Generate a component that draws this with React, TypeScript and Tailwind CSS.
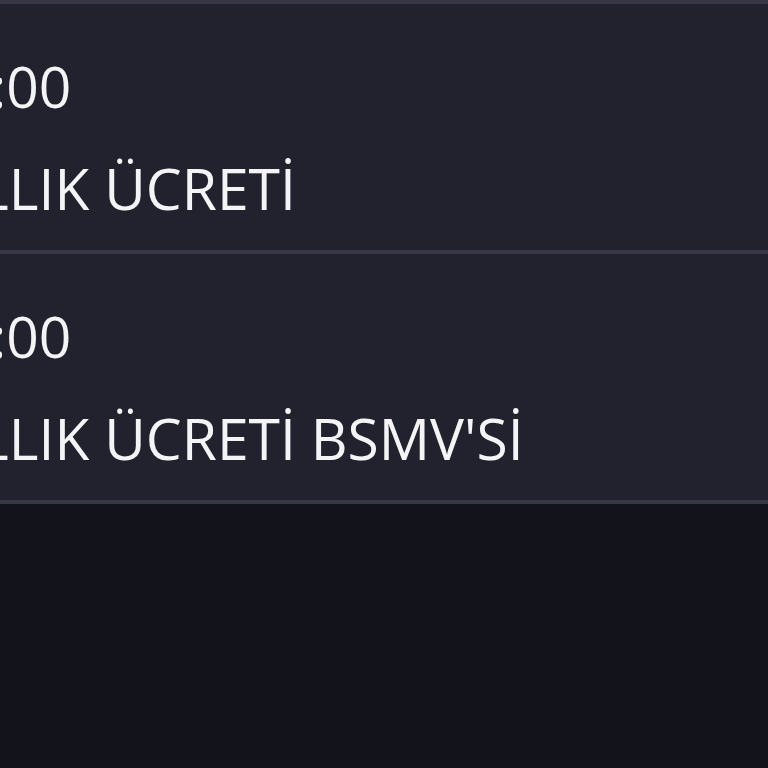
type Row = {
  time: string;
  label: string;
};

const ROWS: Row[] = [
  { time: "00:00", label: "KART YILLIK ÜCRETİ" },
  { time: "00:00", label: "KART YILLIK ÜCRETİ BSMV'Sİ" },
];

export default function App() {
  return (
    <div className="h-[768px] w-[768px] overflow-hidden bg-[#13131b] font-['Open_Sans',sans-serif] text-[#f4f4f6]">
      <div className="h-[4px] bg-[#373846]" />
      {ROWS.map((row, i) => (
        <div
          key={i}
          className="flex h-[250px] flex-col border-b-[4px] border-[#373846] bg-[#21222d] pt-[43px]"
        >
          <div className="-ml-[74px] whitespace-nowrap text-[57px] leading-[79px]">{row.time}</div>
          <div className="-ml-[221px] mt-[23px] whitespace-nowrap text-[57px] leading-[79px]">
            {row.label}
          </div>
        </div>
      ))}
    </div>
  );
}
